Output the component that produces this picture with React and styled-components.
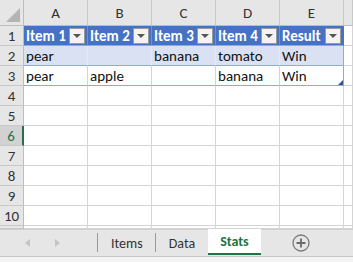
import React from 'react'
import styled, { createGlobalStyle } from 'styled-components'

const Global = createGlobalStyle`
  html, body { margin: 0; padding: 0; background: #fff; }
  body { font-family: Carlito, "Liberation Sans", Arial, sans-serif; overflow: hidden; }
`

const cols = ['A', 'B', 'C', 'D', 'E']
const rows = [
  ['pear', '', 'banana', 'tomato', 'Win'],
  ['pear', 'apple', '', 'banana', 'Win'],
]
const headers = ['Item 1', 'Item 2', 'Item 3', 'Item 4', 'Result']

const Sheet = styled.div`
  width: 353px;
  height: 262px;
  display: flex;
  flex-direction: column;
  overflow: hidden;
`

const Grid = styled.div`
  flex: 1;
  display: grid;
  grid-template-columns: 24px repeat(5, 64px) 1fr;
  grid-template-rows: 26px repeat(10, 20px) 1fr;
  overflow: hidden;
`

const Corner = styled.div`
  background: #e6e6e6;
  border-right: 1px solid #bdbdbd;
  border-bottom: 1px solid #bdbdbd;
  position: relative;
  &::after {
    content: '';
    position: absolute;
    right: 3px;
    bottom: 3px;
    border-style: solid;
    border-width: 0 0 14px 14px;
    border-color: transparent transparent #b4b4b4 transparent;
  }
`

const ColHead = styled.div`
  background: #e6e6e6;
  border-right: 1px solid #c8c8c8;
  border-bottom: 1px solid #bdbdbd;
  display: flex;
  align-items: center;
  justify-content: center;
  font-size: 15px;
  color: #333;
  padding-top: 1px;
`

const RowHead = styled.div`
  background: ${p => (p.$active ? '#d2d2d2' : '#e6e6e6')};
  border-right: ${p => (p.$active ? '2px solid #217346' : '1px solid #bdbdbd')};
  border-bottom: 1px solid #c8c8c8;
  display: flex;
  align-items: center;
  justify-content: center;
  font-size: 15px;
  color: ${p => (p.$active ? '#217346' : '#333')};
`

const Cell = styled.div`
  border-right: 1px solid #d4d4d4;
  border-bottom: 1px solid #d4d4d4;
  font-size: 15px;
  color: #111;
  padding-left: 2px;
  display: flex;
  align-items: center;
  white-space: nowrap;
`

const TCell = styled(Cell)`
  background: ${p => (p.$band ? '#d9e1f2' : '#fff')};
  border-bottom: 1px solid #8ea9db;
  border-right: 1px solid ${p => (p.$last ? '#8ea9db' : p.$band ? '#e4eaf5' : '#d4d4d4')};
  position: relative;
`

const HeadCell = styled(Cell)`
  background: #4472c4;
  color: #fff;
  font-weight: bold;
  border-right: 1px solid ${p => (p.$last ? '#4472c4' : '#6d8fcf')};
  border-bottom: 1px solid #8ea9db;
  justify-content: space-between;
  padding-right: 2px;
`

const Filter = styled.span`
  width: 14px;
  height: 14px;
  background: #f3f3f3;
  border: 1px solid #9a9a9a;
  display: flex;
  align-items: center;
  justify-content: center;
  &::after {
    content: '';
    border-style: solid;
    border-width: 4px 4px 0 4px;
    border-color: #555 transparent transparent transparent;
  }
`

const Handle = styled.span`
  position: absolute;
  right: 0;
  bottom: 0;
  border-style: solid;
  border-width: 0 0 5px 5px;
  border-color: transparent transparent #2f5597 transparent;
`

const TabBar = styled.div`
  height: 26px;
  background: #e6e6e6;
  border-top: 1px solid #d0d0d0;
  border-bottom: 1px solid #c6c6c6;
  display: flex;
  align-items: stretch;
`

const Footer = styled.div`
  height: 5px;
  background: #f3f3f3;
`

const Nav = styled.div`
  width: 98px;
  display: flex;
  align-items: center;
  padding-left: 25px;
  gap: 25px;
  box-sizing: border-box;
  border-right: 1px solid #9a9a9a;
  margin: 3px 0 4px;
`

const Arrow = styled.span`
  border-style: solid;
  border-width: 4px ${p => (p.$dir === 'l' ? '5px 4px 0' : '0 4px 5px')};
  border-color: transparent ${p => (p.$dir === 'l' ? '#c4c4c4' : 'transparent')} transparent ${p => (p.$dir === 'r' ? '#c4c4c4' : 'transparent')};
  width: 0;
  height: 0;
`

const Tab = styled.div`
  display: flex;
  align-items: center;
  justify-content: center;
  padding: 0 ${p => (p.$active ? '12px' : '13px')};
  font-size: 14px;
  color: ${p => (p.$active ? '#217346' : '#333')};
  font-weight: ${p => (p.$active ? 'bold' : 'normal')};
  background: ${p => (p.$active ? '#fff' : 'transparent')};
  border-bottom: ${p => (p.$active ? '2px solid #217346' : 'none')};
  margin-top: ${p => (p.$active ? '-1px' : '0')};
  margin-bottom: ${p => (p.$active ? '1px' : '0')};
  position: relative;
  ${p => p.$sep && `
    &::after {
      content: '';
      position: absolute;
      right: 0;
      top: 3px;
      bottom: 4px;
      width: 1px;
      background: #9a9a9a;
    }
  `}
`

const Add = styled.div`
  margin-left: 31px;
  display: flex;
  align-items: center;
`

export default function App() {
  return (
    <Sheet>
      <Global />
      <Grid>
        <Corner />
        {cols.map(c => <ColHead key={c}>{c}</ColHead>)}
        <ColHead />
        <RowHead>1</RowHead>
        {headers.map((h, i) => (
          <HeadCell key={h} $last={i === 4}>{h}<Filter /></HeadCell>
        ))}
        <Cell />
        {rows.map((r, ri) => (
          <React.Fragment key={ri}>
            <RowHead>{ri + 2}</RowHead>
            {r.map((v, ci) => (
              <TCell key={ci} $band={ri === 0} $last={ci === 4}>
                {v}
                {ri === 1 && ci === 4 && <Handle />}
              </TCell>
            ))}
            <Cell />
          </React.Fragment>
        ))}
        {[4, 5, 6, 7, 8, 9, 10, 11].map(n => (
          <React.Fragment key={n}>
            <RowHead $active={n === 6}>{n < 11 ? n : ''}</RowHead>
            {cols.map(c => <Cell key={c} />)}
            <Cell />
          </React.Fragment>
        ))}
      </Grid>
      <TabBar>
        <Nav>
          <Arrow $dir="l" />
          <Arrow $dir="r" />
        </Nav>
        <Tab $sep>Items</Tab>
        <Tab>Data</Tab>
        <Tab $active>Stats</Tab>
        <Add>
          <svg width="18" height="18" viewBox="0 0 18 18">
            <circle cx="9" cy="9" r="8" fill="none" stroke="#7a7a7a" strokeWidth="1.3" />
            <path d="M9 4.5v9M4.5 9h9" stroke="#6a6a6a" strokeWidth="1.8" />
          </svg>
        </Add>
      </TabBar>
      <Footer />
    </Sheet>
  )
}
